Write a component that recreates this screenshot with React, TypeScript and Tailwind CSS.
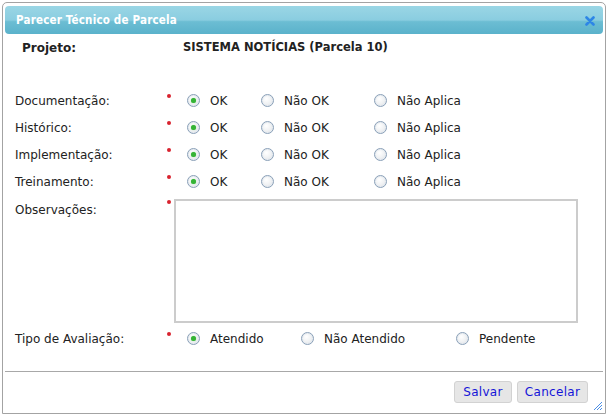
import React from 'react';

type Opt = { label: string; w: string; checked?: boolean };

const Radio = ({ checked }: { checked?: boolean }) => (
    <span className="flex items-center justify-center w-[13px] h-[13px] rounded-full border border-[#8aa0b8] bg-[radial-gradient(circle_at_40%_35%,#ffffff_0%,#eef0f2_55%,#d3d8de_100%)] shadow-[inset_0_0_0_1px_#e6ebf0]">
        {checked && <span className="w-[5px] h-[5px] rounded-full bg-[#35b335] shadow-[0_0_1px_#6ad36a]" />}
    </span>
);

const Required = () => (
    <span className="w-[4px] h-[4px] rounded-full bg-[#d8232f] self-start mt-[7px] ml-[2px]" />
);

const Options = ({ items }: { items: Opt[] }) => (
    <div className="flex items-center ml-[16px]">
        {items.map((o) => (
            <label key={o.label} className={`flex items-center ${o.w}`}>
                <Radio checked={o.checked} />
                <span className="ml-[10px]">{o.label}</span>
            </label>
        ))}
    </div>
);

const Row = ({ label, items }: { label: string; items: Opt[] }) => (
    <div className="flex items-center h-[27px]">
        <span className="w-[150px]">{label}</span>
        <Required />
        <Options items={items} />
    </div>
);

const evalOpts = (): Opt[] => [
    { label: 'OK', w: 'w-[74px]', checked: true },
    { label: 'Não OK', w: 'w-[113px]' },
    { label: 'Não Aplica', w: 'w-[120px]' },
];

export default function App() {
    return (
        <div className="w-[607px] h-[416px] bg-white text-[12px] text-[#222] font-['DejaVu_Sans',sans-serif]">
            <div className="relative ml-[2px] pt-[2px] w-[604px] h-[414px]">
                <div className="flex flex-col h-[412px] border border-[#a3a3a3] rounded-t-[5px] px-[2px] pb-[2px] pt-[3px] bg-white">
                    {/* title bar */}
                    <div className="flex items-center justify-between h-[28px] rounded-[4px] px-[11px] pt-[1px] bg-[linear-gradient(to_bottom,#9ad6e5_0%,#8acde0_50%,#6cbdd3_56%,#5ab2cb_100%)]">
                        <span className="text-white font-bold text-[11.5px] tracking-[0.2px] font-['DejaVu_Sans_Condensed','DejaVu_Sans',sans-serif]">
                            Parecer Técnico de Parcela
                        </span>
                        <svg width="10" height="10" viewBox="0 0 10 10" className="mr-[-3px]">
                            <path d="M1.5 1.5 L8.5 8.5 M8.5 1.5 L1.5 8.5" stroke="#2d86e6" strokeWidth="2.6" strokeLinecap="round" />
                        </svg>
                    </div>

                    <div className="flex flex-col pl-[10px] flex-1">
                        <div className="flex items-center h-[28px] font-bold">
                            <span className="w-[168px] pl-[7px] text-[12px]">Projeto:</span>
                            <span className="text-[11.5px]">SISTEMA NOTÍCIAS (Parcela 10)</span>
                        </div>

                        <div className="mt-[25px]">
                            <Row label="Documentação:" items={evalOpts()} />
                            <Row label="Histórico:" items={evalOpts()} />
                            <Row label="Implementação:" items={evalOpts()} />
                            <Row label="Treinamento:" items={evalOpts()} />
                        </div>

                        <div className="flex mt-[4px]">
                            <span className="w-[150px] pt-[2px]">Observações:</span>
                            <span className="w-[4px] h-[4px] rounded-full bg-[#d8232f] mt-[1px] ml-[2px]" />
                            <textarea className="ml-[3px] w-[404px] h-[124px] border-2 border-[#cccccc] resize-none outline-none" />
                        </div>

                        <div className="flex items-center h-[27px] mt-[2px]">
                            <span className="w-[150px]">Tipo de Avaliação:</span>
                            <Required />
                            <Options
                                items={[
                                    { label: 'Atendido', w: 'w-[114px]', checked: true },
                                    { label: 'Não Atendido', w: 'w-[155px]' },
                                    { label: 'Pendente', w: 'w-[100px]' },
                                ]}
                            />
                        </div>
                    </div>

                    {/* footer */}
                    <div className="flex justify-end items-start h-[40px] border-t border-[#a8a8a8] pt-[9px] pr-[15px]">
                        <button className="h-[22px] w-[58px] bg-[#e6e6e6] border border-[#d2d2d2] rounded-[3px] text-[#1515d8] tracking-[0.3px]">
                            Salvar
                        </button>
                        <button className="ml-[5px] h-[22px] w-[71px] bg-[#e6e6e6] border border-[#d2d2d2] rounded-[3px] text-[#1515d8] tracking-[0.3px]">
                            Cancelar
                        </button>
                    </div>
                </div>
                <svg width="11" height="11" viewBox="0 0 11 11" className="absolute right-[3px] bottom-[3px]">
                    <path d="M10 2 L2 10 M10 5 L5 10 M10 8 L8 10" stroke="#4a8fe8" strokeWidth="1" />
                </svg>
            </div>
        </div>
    );
}
